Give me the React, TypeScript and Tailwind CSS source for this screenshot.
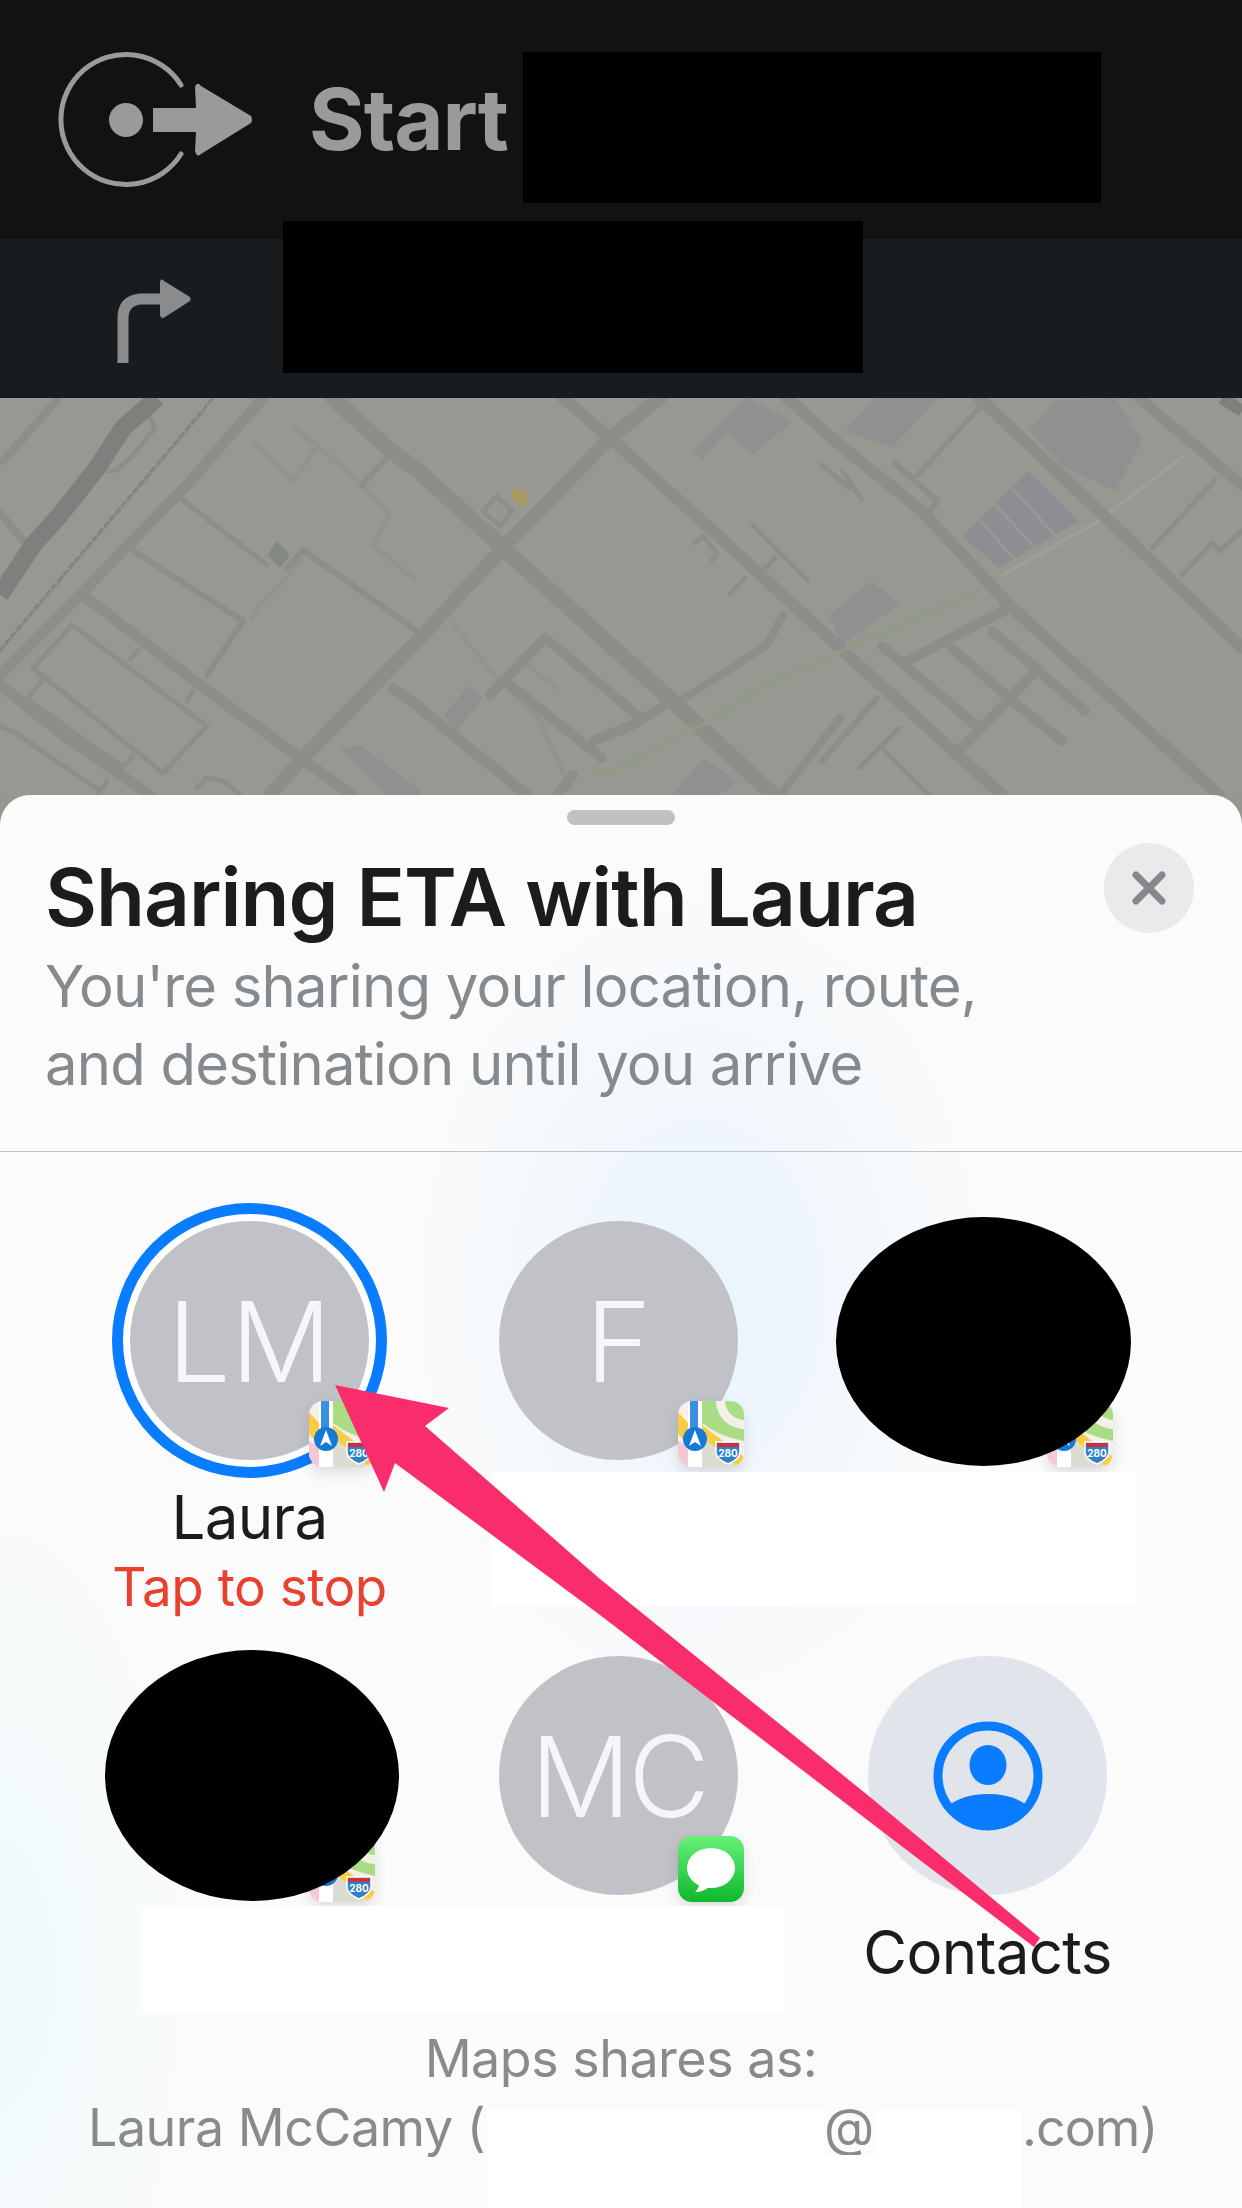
const font = "font-['Inter','Liberation_Sans',sans-serif]";

function StartIcon() {
  return (
    <svg width="198" height="140" viewBox="56 50 198 140" className="shrink-0">
      <path d="M181 85 A65 65 0 1 0 181 154" fill="none" stroke="#9a9a9c" strokeWidth="5" strokeLinecap="round" />
      <ellipse cx="126" cy="120" rx="17" ry="17" fill="#9a9a9c" />
      <path d="M153 108 H196 L195 87 Q197 81 201 86 L251 116 Q253 120 251 123 L201 154 Q197 158 195 151 L196 132 H153 Z" fill="#9a9a9c" />
    </svg>
  );
}

function TurnIcon() {
  return (
    <svg width="74" height="85" viewBox="117 279 74 85" className="shrink-0">
      <path d="M123 363 V318 Q123 301 140 299 H160" fill="none" stroke="#8a8b8d" strokeWidth="11" />
      <path d="M160 282 Q161 277 164 281 L190 297 Q191 299 190 301 L165 317 Q161 320 160 315 Z" fill="#8a8b8d" />
    </svg>
  );
}

// stroke width -> list of street polylines, traced from the map
const streets: [number, string[]][] = [
  [16, ["333,398 387,448 420,472 503,548 680,708 773,795"]],
  [14, ["660,398 610,438 503,548 420,638 303,758 270,795"]],
  [12, [
    "563,398 610,438 713,531 840,648 1002,795",
    "979,398 1099,511 1242,648",
    "787,398 840,445 922,511 1009,605 1219,795",
  ]],
  [11, [
    "1139,398 1242,485",
    "83,595 200,685 300,758 353,795",
    "0,685 67,738 150,795",
    "393,688 420,708 527,795",
    "263,398 187,485 87,588 0,675",
  ]],
  [10, [
    "490,695 545,638 637,715",
    "510,685 602,758",
    "593,741 633,725 663,706",
    "882,646 979,728",
    "952,648 1009,698 1062,741",
    "992,631 1085,711",
    "1039,668 955,755",
    "909,660 1009,608",
    "573,775 557,795",
  ]],
  [8, [
    "783,615 767,645 680,701",
    "840,718 780,795",
    "57,400 3,461",
    "0,513 28,546",
  ]],
  [6, [
    "387,458 362,485",
    "132,550 243,621 207,675",
    "303,550 417,631",
    "303,550 287,568",
    "877,698 822,761",
    "895,463 937,501 929,513",
  ]],
  [5, [
    "180,498 267,565",
    "138,650 130,660",
    "193,691 187,701",
    "42,680 28,698",
    "28,700 120,765",
    "133,756 122,768",
    "0,726 13,731 100,791",
    "107,781 98,795",
    "197,788 207,778 223,781 240,795",
    "753,526 808,581",
    "775,558 763,571",
    "745,578 730,593",
    "979,408 915,478",
    "822,465 849,488",
    "842,471 862,500",
    "1215,480 1152,548",
    "1182,575 1212,543 1219,551 1242,531",
    "899,728 859,768",
    "882,748 929,795",
    "150,418 155,428 133,455 117,470 108,471",
    "72,625 207,726 163,773 33,668 72,625",
    "483,511 497,496 512,511 500,526 483,511",
    "695,543 703,536 717,553 712,560",
  ]],
];

function MapView() {
  return (
    <svg viewBox="0 398 1242 397" className="block h-[397px] w-full">
      <rect x="0" y="398" width="1242" height="397" fill="#989893" />
      {/* buildings */}
      <g fill="#909090">
        <polygon points="845,431 875,398 939,398 892,448" />
        <polygon points="1029,431 1055,401 1115,398 1142,441 1115,491 1062,465" />
        <polygon points="693,451 747,398 793,421 753,455 727,431 703,460" />
        <polygon points="829,615 872,581 899,605 842,645" />
        <polygon points="443,715 470,685 483,698 457,731" />
        <polygon points="340,748 360,745 420,790 420,795 385,795" />
        <polygon points="673,795 703,758 737,781 720,795" />
      </g>
      <polygon points="962,536 1029,471 1079,521 999,568" fill="#8e8e92" />
      <g fill="none" stroke="#989893" strokeWidth="3">
        <line x1="980" y1="520" x2="1015" y2="560" />
        <line x1="995" y1="505" x2="1035" y2="547" />
        <line x1="1012" y1="488" x2="1055" y2="535" />
      </g>
      {/* faint paths */}
      <g fill="none" stroke="#92928e" strokeWidth="4">
        <polyline points="293,425 347,471 390,515 373,545 417,581" />
        <polyline points="253,440 293,481 317,447 293,425" />
        <polyline points="303,558 287,578 257,608 250,621" />
        <polyline points="450,620 490,670 540,720 570,790" />
        <polyline points="540,640 520,660 560,690" />
      </g>
      <polyline points="1002,575 1099,521 1185,455" fill="none" stroke="#9e9e9a" strokeWidth="4" />
      {/* streets */}
      <g fill="none" stroke="#8d8d8a" strokeLinecap="round" strokeLinejoin="round">
        {streets.map(([width, lines]) =>
          lines.map((points) => <polyline key={points} points={points} strokeWidth={width} />)
        )}
      </g>
      {/* rail and highway */}
      <polyline points="213,398 7,641 0,650" fill="none" stroke="#80807e" strokeWidth="2" strokeDasharray="7 2" />
      <polyline points="205,410 0,652" fill="none" stroke="#888886" strokeWidth="1.5" />
      <polyline points="157,398 123,428 97,468 60,515 33,545 0,595" fill="none" stroke="#7f7f7d" strokeWidth="18" />
      <polyline points="1222,398 1242,411" fill="none" stroke="#7f7f7d" strokeWidth="12" />
      {/* route and places */}
      <polyline points="979,591 849,648 760,688 710,721 680,735 627,765 587,778" fill="none" stroke="#8f9c85" strokeWidth="4" />
      <ellipse cx="520" cy="497" rx="10" ry="7" transform="rotate(40 520 497)" fill="#a89a62" />
      <polygon points="277,541 290,555 280,568 267,555" fill="#828a86" />
    </svg>
  );
}

function MapsBadge() {
  return (
    <svg viewBox="0 0 66 66" className="absolute left-[244px] top-[180px] h-[66px] w-[66px] rounded-[14px] shadow-[0_6px_14px_rgba(0,0,0,0.12)]">
      <rect width="66" height="66" fill="#f3f1e7" />
      <path d="M24 0 H66 V40 Q40 35 24 22 Z" fill="#a9dc85" />
      <path d="M42 -2 Q44 22 68 24" fill="none" stroke="#f3f1e7" strokeWidth="9" />
      <path d="M24 36 L60 66 H24 Z" fill="#dcdcd2" />
      <path d="M24 24 L66 56 V66 H60 L24 36 Z" fill="#f8cd45" />
      <path d="M0 11 L10 22 V44 L0 33 Z" fill="#f8cd45" />
      <path d="M0 40 L10 46 V66 H0 Z" fill="#f6c7d4" />
      <rect x="10" width="14" height="66" fill="#ffffff" />
      <rect x="12" width="8" height="30" fill="#3b8fe0" />
      <circle cx="17" cy="38" r="12" fill="#147ad6" />
      <path d="M17 29 L23 45 L17 41 L11 45 Z" fill="#ffffff" />
      <path d="M38 41 H62 V51 Q62 58 50 63 Q38 58 38 51 Z" fill="#2f80c9" stroke="#ffffff" strokeWidth="1.5" />
      <rect x="39" y="42" width="22" height="4" fill="#c8323c" />
      <text x="50" y="56" textAnchor="middle" fontSize="10" fontWeight="700" fill="#ffffff" fontFamily="Inter, sans-serif">280</text>
    </svg>
  );
}

function MessagesBadge() {
  return (
    <svg viewBox="0 0 66 66" className="absolute left-[244px] top-[180px] h-[66px] w-[66px] rounded-[14px] shadow-[0_6px_14px_rgba(0,0,0,0.12)]">
      <defs>
        <linearGradient id="msg" x1="0" y1="0" x2="0" y2="1">
          <stop offset="0" stopColor="#68f07a" />
          <stop offset="1" stopColor="#0fb82e" />
        </linearGradient>
      </defs>
      <rect width="66" height="66" fill="url(#msg)" />
      <ellipse cx="33" cy="32" rx="24" ry="20" fill="#ffffff" />
      <path d="M22 46 Q20 54 17 56 Q26 56 32 50 Z" fill="#ffffff" />
    </svg>
  );
}

function ContactsIcon() {
  return (
    <svg width="110" height="110" viewBox="0 0 110 110">
      <defs>
        <clipPath id="person">
          <circle cx="55" cy="55" r="50" />
        </clipPath>
      </defs>
      <circle cx="55" cy="55" r="50" fill="none" stroke="#0a7cff" strokeWidth="9" />
      <ellipse cx="55" cy="44" rx="18.5" ry="20" fill="#0a7cff" />
      <path d="M15 85 Q30 73 55 73 Q80 73 95 85 L90 110 H20 Z" fill="#0a7cff" clipPath="url(#person)" />
    </svg>
  );
}

function Avatar({ initials, size }: { initials?: string; size: string }) {
  return (
    <div className={`mx-auto flex h-[239px] w-[239px] items-center justify-center rounded-full bg-[#c1c2c8] font-[350] text-[#f5f6f8] ${size}`}>
      {initials}
    </div>
  );
}

const Label = ({ children }: { children: React.ReactNode }) => (
  <p className="mt-[22px] text-center text-[60px] leading-[70px] tracking-[-0.7px] text-[#1c1c1e]">{children}</p>
);

export default function App() {
  return (
    <div className={`relative h-[2208px] w-[1242px] overflow-hidden bg-[#97978f] ${font}`}>
      {/* directions */}
      <div className="flex h-[239px] items-center gap-[55px] bg-[#101214] pl-[56px]">
        <StartIcon />
        <span className="text-[85px] font-bold leading-none tracking-[-1px] text-[#9a9a9c]">Start</span>
      </div>
      <div className="flex h-[159px] items-center bg-[#191c1e] pl-[117px] pt-[6px]">
        <TurnIcon />
      </div>
      <div className="absolute left-[523px] top-[52px] h-[151px] w-[578px] bg-black" />
      <div className="absolute left-[283px] top-[221px] h-[152px] w-[580px] bg-black" />

      <MapView />

      {/* sheet */}
      <div className="relative h-[1413px] overflow-hidden rounded-t-[30px] bg-[#fbfbfb] bg-[radial-gradient(ellipse_300px_420px_at_700px_500px,#e9f4fd_0%,rgba(233,244,253,0)_100%),radial-gradient(ellipse_200px_500px_at_0px_1180px,#eef9fb_0%,rgba(236,248,251,0)_100%)]">
        <div className="mx-auto mt-[15px] h-[15px] w-[108px] rounded-full bg-[#c0c1c3]" />
        <div className="mt-[32px] flex items-start justify-between pl-[45px] pr-[48px]">
          <div>
            <h1 className="text-[80px] font-semibold leading-[80px] tracking-[-1px] text-[#1c1c1e]">Sharing ETA with Laura</h1>
            <p className="mt-[10px] text-[58px] leading-[78px] tracking-[-0.8px] text-[#858a8f]">
              You're sharing your location, route,
              <br />
              and destination until you arrive
            </p>
          </div>
          <div className="-mt-[14px] flex h-[90px] w-[90px] items-center justify-center rounded-full bg-[#e9eaec]">
            <svg width="34" height="34" viewBox="0 0 34 34">
              <path d="M4 4 L30 30 M30 4 L4 30" stroke="#85878a" strokeWidth="7" strokeLinecap="round" />
            </svg>
          </div>
        </div>
        <div className="mt-[48px] h-px bg-[#c2c4c6]" />

        {/* contacts */}
        <div className="mt-[69px] grid grid-cols-[369px_369px_369px] grid-rows-[435px_368px] pl-[65px]">
          <div className="relative">
            <div className="absolute left-[47px] top-[-18px] h-[275px] w-[275px] rounded-full border-[11px] border-[#0a7cff] bg-white" />
            <div className="relative">
              <Avatar initials="LM" size="text-[112px]" />
              <MapsBadge />
              <Label>Laura</Label>
              <p className="mt-[1px] text-center text-[53px] leading-[68px] tracking-[-0.5px] text-[#e8412f]">Tap to stop</p>
            </div>
          </div>
          <div className="relative">
            <Avatar initials="F" size="text-[112px]" />
            <MapsBadge />
          </div>
          <div className="relative">
            <MapsBadge />
          </div>
          <div className="relative">
            <MapsBadge />
          </div>
          <div className="relative">
            <Avatar initials="MC" size="text-[112px] tracking-[-3px]" />
            <MessagesBadge />
          </div>
          <div>
            <div className="mx-auto flex h-[239px] w-[239px] items-center justify-center rounded-full bg-[#e2e4ec]">
              <ContactsIcon />
            </div>
            <Label>Contacts</Label>
          </div>
        </div>

        {/* footer */}
        <p className="text-center text-[52px] leading-[69px] tracking-[-0.5px] text-[#8a8a8c]">Maps shares as:</p>
        <div className="flex items-start pl-[88px] text-[52px] leading-[69px] tracking-[-0.5px] text-[#8a8a8c]">
          <span className="w-[399px] shrink-0 whitespace-nowrap">Laura McCamy (</span>
          <div className="relative mt-[17px] h-[100px] w-[337px] shrink-0 bg-white" />
          <span className="w-[51px] shrink-0 whitespace-nowrap">@y</span>
          <div className="relative mt-[17px] h-[100px] w-[147px] shrink-0 bg-white" />
          <span className="whitespace-nowrap tracking-[-1px]">.com)</span>
        </div>

        {/* redactions */}
        <div className="absolute left-[491px] top-[677px] h-[134px] w-[645px] bg-white" />
        <div className="absolute left-[143px] top-[1111px] h-[108px] w-[641px] bg-white" />
        <div className="absolute left-[820px] top-[1360px] h-[60px] w-[55px] bg-white" />
        <div className="absolute left-[836px] top-[422px] h-[249px] w-[295px] rounded-[50%] bg-black" />
        <div className="absolute left-[105px] top-[855px] h-[251px] w-[294px] rounded-[50%] bg-black" />
      </div>

      {/* annotation arrow */}
      <svg viewBox="0 0 1242 2208" className="absolute inset-0 h-[2208px] w-[1242px]">
        <polygon points="335,1385 449,1408 425,1426 600,1579 870,1797 1040,1938 1034,1947 887,1835 600,1615 395,1463 384,1492" fill="#f92d6b" />
      </svg>
    </div>
  );
}
